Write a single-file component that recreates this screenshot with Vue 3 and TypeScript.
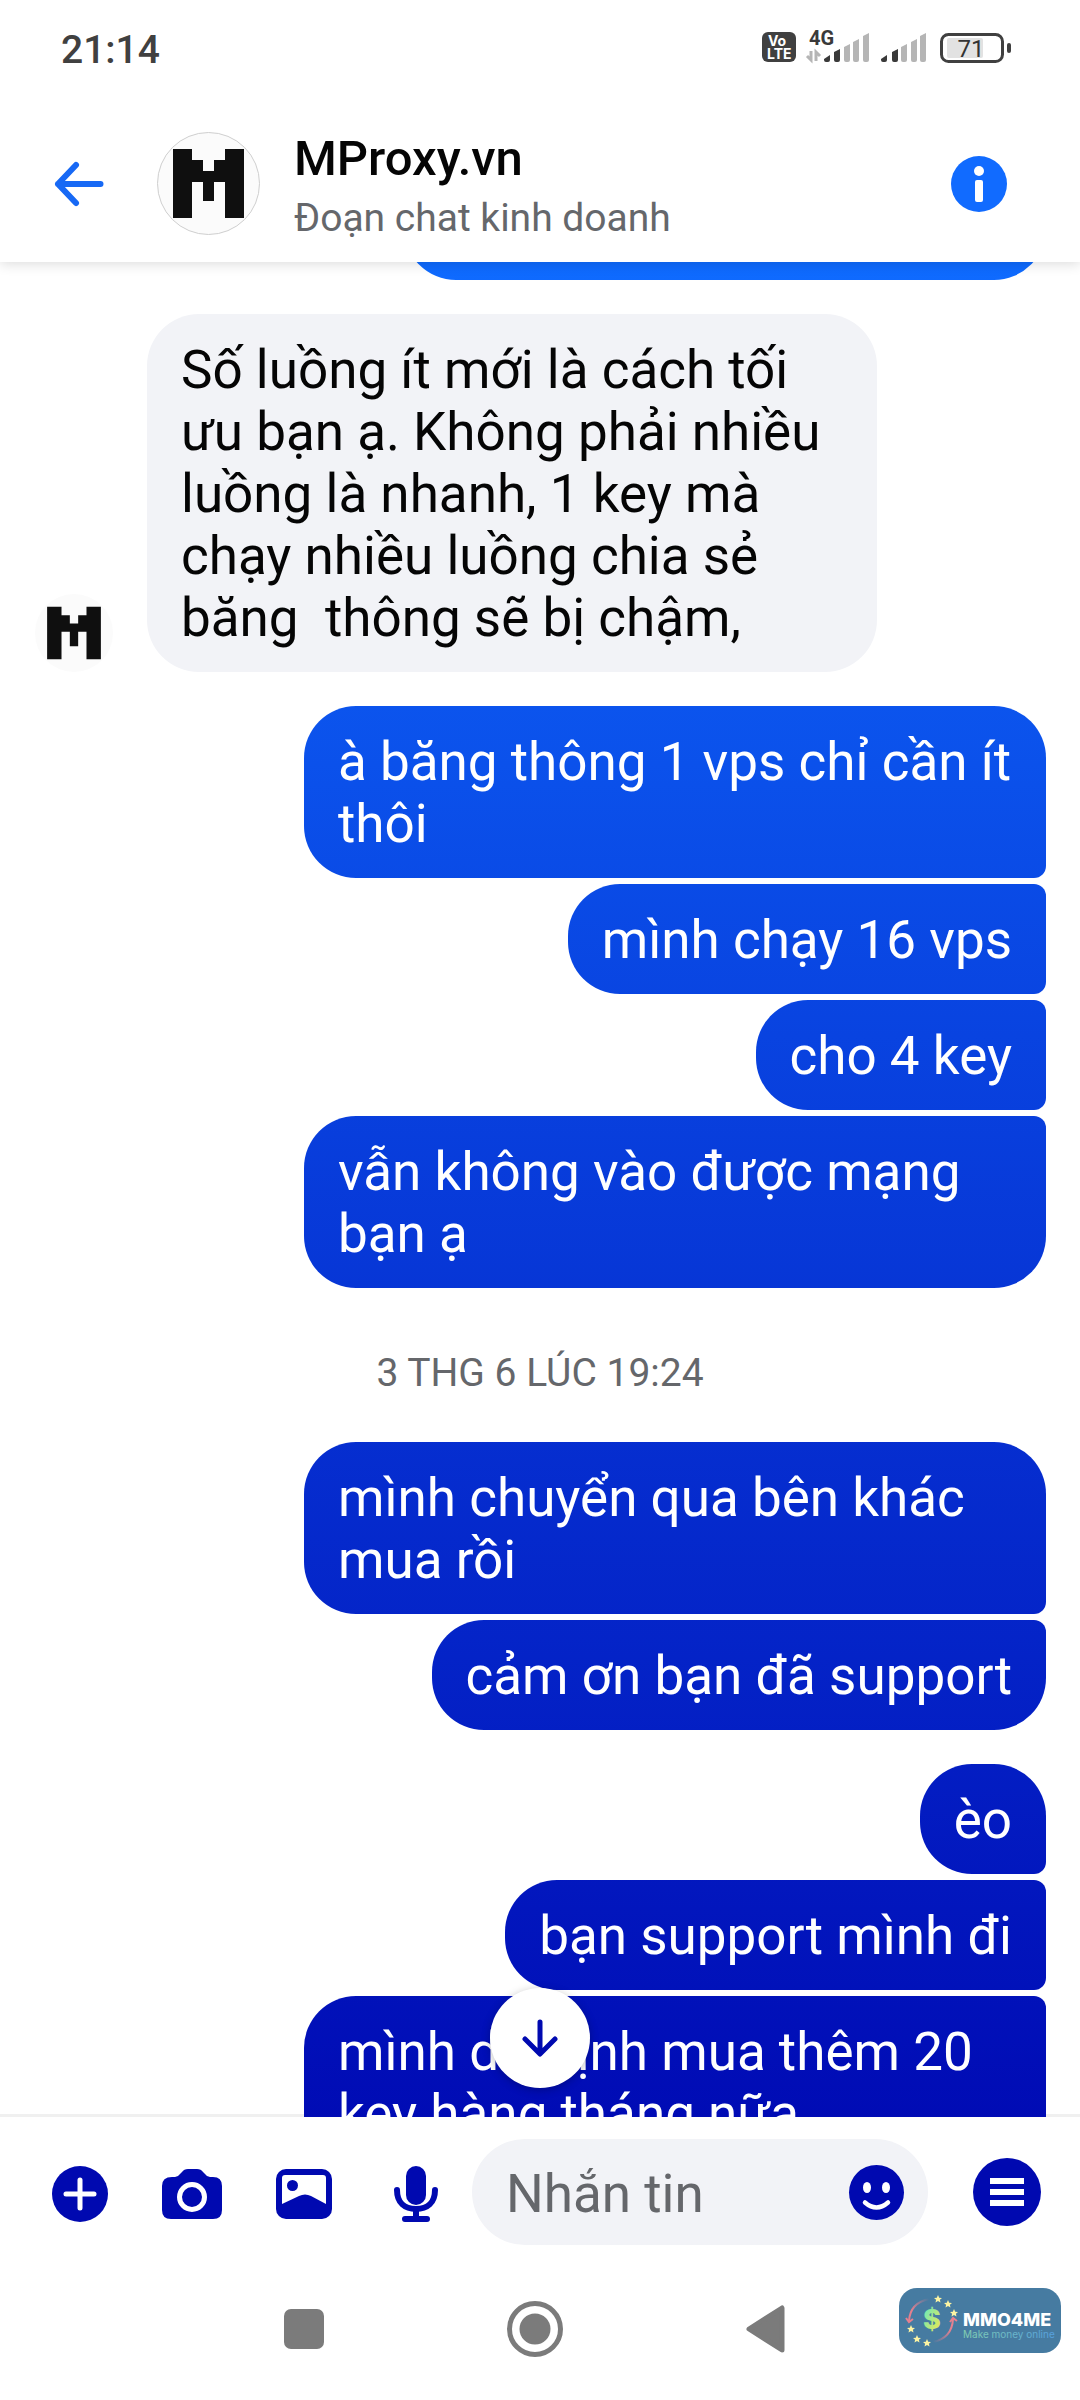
<script setup lang="ts">
import { ref } from 'vue'

type Shape = 'single' | 'first' | 'middle' | 'last'

interface Message {
  id: number
  text: string
  shape: Shape
}

const firstGroup: Message[] = [
  { id: 1, text: 'à băng thông 1 vps chỉ cần ít thôi', shape: 'first' },
  { id: 2, text: 'mình chạy 16 vps', shape: 'middle' },
  { id: 3, text: 'cho 4 key', shape: 'middle' },
  { id: 4, text: 'vẫn không vào được mạng bạn ạ', shape: 'last' },
]

const secondGroup: Message[] = [
  { id: 5, text: 'mình chuyển qua bên khác mua rồi', shape: 'first' },
  { id: 6, text: 'cảm ơn bạn đã support', shape: 'last' },
]

const thirdGroup: Message[] = [
  { id: 7, text: 'èo', shape: 'first' },
  { id: 8, text: 'bạn support mình đi', shape: 'middle' },
  { id: 9, text: 'mình dự định mua thêm 20 key hàng tháng nữa', shape: 'middle' },
]

const groupedAfterStamp = [secondGroup, thirdGroup]
const draft = ref('')
const logoPath = 'M16 17H35V28H46V39H57V28H68V17H87V86H68V50H57V69H46V50H35V86H16Z'
const star = 'M0-4 1.2-1.3 4-1.1 1.9.8 2.5 3.6 0 2.1-2.5 3.6-1.9.8-4-1.1-1.2-1.3Z'
const stars = [
  [39, 11], [49, 16], [55, 25], [12, 41], [18, 51], [28, 55],
]
</script>

<template>
  <div class="screen">
    <div class="status">
      <span class="clock">21:14</span>
      <svg class="status-icons" width="250" height="36" viewBox="0 0 250 36" aria-hidden="true">
        <rect x="0" y="4" width="34" height="30" rx="6" fill="#404040" />
        <text x="6" y="18" class="volte">Vo</text>
        <text x="5" y="31" class="volte">LTE</text>
        <text x="47" y="17" class="net">4G</text>
        <path d="M49 23v9l-4-4M54 33v-9l4 4" fill="none" stroke="#b5b5b5" stroke-width="3" />
        <g fill="#3a3a3a">
          <path d="M62 34v-3l6-4v5q0 2-2 2h-2q-2 0-2-2zM72 32v-8l6-3v11q0 2-2 2h-2q-2 0-2-2zM119 32v-1l6-4v5q0 2-2 2h-2q-2 0-2-2zM130 32v-8l6-3v11q0 2-2 2h-2q-2 0-2-2z" />
        </g>
        <g fill="#b5b5b5">
          <path d="M82 32V19l6-3v16q0 2-2 2h-2q-2 0-2-2zM91 32V14l6-3v21q0 2-2 2h-2q-2 0-2-2zM101 32V8l6-3v27q0 2-2 2h-2q-2 0-2-2zM139 32V19l6-3v16q0 2-2 2h-2q-2 0-2-2zM149 32V14l6-3v21q0 2-2 2h-2q-2 0-2-2zM158 32V8l6-3v27q0 2-2 2h-2q-2 0-2-2z" />
        </g>
        <rect x="179.500" y="6.500" width="61" height="27" rx="7" fill="none" stroke="#404040" stroke-width="3" />
        <rect x="185" y="10" width="36" height="20" rx="2" fill="#e2e2e2" />
        <rect x="245" y="15" width="4" height="10" rx="2" fill="#404040" />
        <text x="209" y="29" text-anchor="middle" class="charge">71</text>
      </svg>
    </div>

    <header class="header">
      <button class="icon-button back" type="button" aria-label="Quay lại">
        <svg width="50" height="46" viewBox="0 0 50 46">
          <path d="M46.500 23H4M22 4 4 23l18 19" fill="none" stroke="#1769f5" stroke-width="6" stroke-linecap="round" stroke-linejoin="round" />
        </svg>
      </button>
      <svg class="avatar" width="103" height="103" viewBox="0 0 103 103" aria-hidden="true">
        <circle cx="51.500" cy="51.500" r="51" fill="#fbfbfb" stroke="#cfcfcf" />
        <path :d="logoPath" fill="#0f0f0f" />
      </svg>
      <div class="contact">
        <h1 class="name">MProxy.vn</h1>
        <p class="kind">Đoạn chat kinh doanh</p>
      </div>
      <button class="icon-button" type="button" aria-label="Thông tin">
        <svg width="56" height="56" viewBox="0 0 56 56">
          <circle cx="28" cy="28" r="28" fill="#116bff" />
          <circle cx="28" cy="15" r="5" fill="#fff" />
          <rect x="24" y="24" width="8" height="22" rx="2" fill="#fff" />
        </svg>
      </button>
    </header>

    <main class="chat">
      <div class="bubble sent last scrolled" aria-hidden="true"></div>

      <div class="incoming">
        <svg width="78" height="78" viewBox="0 0 103 103" aria-hidden="true">
          <circle cx="51.500" cy="51.500" r="51.500" fill="#fbfbfb" />
          <path :d="logoPath" fill="#0f0f0f" />
        </svg>
        <p class="bubble received">Số luồng ít mới là cách tối ưu bạn ạ. Không phải nhiều luồng là nhanh, 1 key mà chạy nhiều luồng chia sẻ băng&nbsp; thông sẽ bị chậm,</p>
      </div>

      <div class="group">
        <p v-for="m in firstGroup" :key="m.id" class="bubble sent" :class="m.shape">{{ m.text }}</p>
      </div>

      <time class="stamp">3 THG 6 LÚC 19:24</time>

      <div v-for="(group, i) in groupedAfterStamp" :key="i" class="group">
        <p v-for="m in group" :key="m.id" class="bubble sent" :class="m.shape">{{ m.text }}</p>
      </div>

      <button class="jump" type="button" aria-label="Xuống tin nhắn mới nhất">
        <svg width="36" height="38" viewBox="0 0 36 38">
          <path d="M18 3v31M3 20l15 15 15-15" fill="none" stroke="#0009b0" stroke-width="5" stroke-linecap="round" stroke-linejoin="round" />
        </svg>
      </button>
    </main>

    <form class="composer" @submit.prevent>
      <button class="icon-button tool" type="button" aria-label="Thêm">
        <svg width="56" height="56" viewBox="0 0 56 56">
          <circle cx="28" cy="28" r="28" fill="#0009b0" />
          <path d="M28 14v28M14 28h28" stroke="#fff" stroke-width="5" stroke-linecap="round" />
        </svg>
      </button>
      <button class="icon-button tool" type="button" aria-label="Máy ảnh">
        <svg width="60" height="56" viewBox="0 0 60 56">
          <path d="M10 11h3q3 0 5-3l2-2q2-3 6-3h9q4 0 6 3l2 2q2 3 5 3h3q9 0 9 9v24q0 9-9 9H9q-9 0-9-9V20q0-9 10-9z" fill="#0009b0" />
          <circle cx="30" cy="31" r="12.500" fill="none" stroke="#fff" stroke-width="5" />
        </svg>
      </button>
      <button class="icon-button tool" type="button" aria-label="Ảnh">
        <svg width="56" height="56" viewBox="0 0 56 56">
          <rect x="0" y="3" width="56" height="50" rx="10" fill="#0009b0" />
          <path d="M9 9h38q3 0 3 3v26L35 30q-6-3-12 0L6 38V12q0-3 3-3z" fill="#fff" />
          <circle cx="16.500" cy="19.500" r="5.500" fill="#0009b0" />
        </svg>
      </button>
      <button class="icon-button tool" type="button" aria-label="Ghi âm">
        <svg width="44" height="56" viewBox="0 0 44 56">
          <rect x="12" y="0" width="20" height="39" rx="10" fill="#0009b0" />
          <path d="M3 24c0 13 8 19 19 19s19-6 19-19M22 43v10M11 53h22" fill="none" stroke="#0009b0" stroke-width="6" stroke-linecap="round" />
        </svg>
      </button>
      <div class="field">
        <input v-model="draft" type="text" placeholder="Nhắn tin" aria-label="Nhắn tin" />
        <button class="icon-button" type="button" aria-label="Biểu tượng cảm xúc">
          <svg width="55" height="55" viewBox="0 0 55 55">
            <circle cx="27.500" cy="27.500" r="27.500" fill="#0009b0" />
            <ellipse cx="18" cy="22.500" rx="4" ry="5.500" fill="#fff" />
            <ellipse cx="37" cy="22.500" rx="4" ry="5.500" fill="#fff" />
            <path d="M16 37.500q11.500 10 23 0" fill="none" stroke="#fff" stroke-width="4.500" stroke-linecap="round" />
          </svg>
        </button>
      </div>
      <button class="icon-button menu" type="button" aria-label="Menu">
        <svg width="68" height="68" viewBox="0 0 68 68">
          <circle cx="34" cy="34" r="34" fill="#0009b0" />
          <path d="M17 20h34v6H17zM17 31h34v6H17zM17 42h34v6H17z" fill="#fff" />
        </svg>
      </button>
    </form>

    <nav class="system-nav">
      <button class="icon-button" type="button" aria-label="Ứng dụng gần đây">
        <svg width="56" height="56" viewBox="0 0 56 56"><rect x="8" y="8" width="40" height="40" rx="7" fill="#7b7b7b" /></svg>
      </button>
      <button class="icon-button" type="button" aria-label="Màn hình chính">
        <svg width="56" height="56" viewBox="0 0 56 56">
          <circle cx="28" cy="28" r="25.500" fill="none" stroke="#7b7b7b" stroke-width="5" />
          <circle cx="28" cy="28" r="15.500" fill="#7b7b7b" />
        </svg>
      </button>
      <button class="icon-button" type="button" aria-label="Trở về">
        <svg width="56" height="56" viewBox="0 0 56 56">
          <path d="M11 28 44 7v42z" fill="#7b7b7b" stroke="#7b7b7b" stroke-width="5" stroke-linejoin="round" />
        </svg>
      </button>
    </nav>

    <div class="watermark">
      <svg width="162" height="65" viewBox="0 0 162 65">
        <defs>
          <linearGradient id="dollar" x1="0" y1="0" x2="1" y2="1">
            <stop offset="0.200" stop-color="#7be8b0" />
            <stop offset="0.900" stop-color="#eee94c" />
          </linearGradient>
          <linearGradient id="tagline" x1="0" y1="0" x2="1" y2="0">
            <stop offset="0" stop-color="#83d0b0" />
            <stop offset="1" stop-color="#559fdf" />
          </linearGradient>
          <linearGradient id="arcDown" x1="0" y1="1" x2="1" y2="0">
            <stop offset="0.300" stop-color="#e5808f" />
            <stop offset="1" stop-color="#e5808f" stop-opacity="0" />
          </linearGradient>
          <linearGradient id="arcUp" x1="1" y1="0" x2="0" y2="1">
            <stop offset="0.300" stop-color="#e5808f" />
            <stop offset="1" stop-color="#e5808f" stop-opacity="0" />
          </linearGradient>
        </defs>
        <path d="M30 11Q11 15 10 33" fill="none" stroke="url(#arcDown)" stroke-width="2" />
        <path d="M7 30l3 4 4-3M51 34l3-4 4 3" fill="none" stroke="#e5808f" stroke-width="2" />
        <path d="M54 31Q53 50 34 54" fill="none" stroke="url(#arcUp)" stroke-width="2" />
        <path v-for="(s, i) in stars" :key="i" :d="star" :transform="`translate(${s[0]} ${s[1]})`" fill="#fcf4a3" />
        <text x="33" y="41" text-anchor="middle" class="dollar">$</text>
        <text x="64" y="38" class="brand">MMO4ME</text>
        <text x="64" y="50" class="tagline">Make money online</text>
      </svg>
    </div>
  </div>
</template>

<style>
body {
  margin: 0;
  background: #fff;
}
</style>

<style scoped>
.screen {
  position: relative;
  display: flex;
  flex-direction: column;
  height: 100vh;
  overflow: hidden;
  background: #fff;
  color: #050505;
  font-family: Roboto, 'Noto Sans', sans-serif;
}

h1,
p {
  margin: 0;
}

svg {
  display: block;
  flex: none;
  overflow: visible;
}

.icon-button {
  display: flex;
  flex: none;
  align-items: center;
  justify-content: center;
  padding: 0;
  border: 0;
  background: none;
}

.status {
  position: relative;
  z-index: 2;
  display: flex;
  flex: none;
  justify-content: space-between;
  align-items: flex-start;
  box-sizing: border-box;
  height: 105px;
  padding: 28px 68px 0 61px;
  background: #fff;
}

.clock {
  font-size: 39px;
  font-weight: 500;
  line-height: 44px;
  color: #404040;
}

.volte {
  font: 700 14px Inter, sans-serif;
  fill: #fff;
}

.net {
  font-size: 20px;
  font-weight: 700;
  fill: #3a3a3a;
}

.charge {
  font-size: 24px;
  fill: #333;
}

.header {
  position: relative;
  z-index: 1;
  display: flex;
  flex: none;
  align-items: center;
  height: 157px;
  padding: 0 73px 0 34px;
  background: #fff;
  box-shadow: 0 2px 12px rgba(0, 0, 0, 0.14);
}

.back {
  width: 90px;
}

.avatar {
  margin-left: 33px;
}

.contact {
  flex: 1;
  margin-left: 34px;
  padding-top: 8px;
}

.name {
  font-size: 49px;
  font-weight: 500;
  line-height: 60px;
}

.kind {
  font-size: 39px;
  line-height: 58px;
  color: #65676b;
}

.chat {
  position: relative;
  z-index: 0;
  display: flex;
  flex: 1;
  flex-direction: column;
  gap: 34px;
  min-height: 0;
  overflow: hidden;
}

.chat::after {
  content: '';
  position: absolute;
  z-index: -1;
  right: 0;
  bottom: 0;
  left: 0;
  height: 3px;
  background: #f0f0f0;
}

.chat > * {
  flex: none;
}

.bubble {
  box-sizing: border-box;
  padding: 25px 34px 23px;
  border-radius: 52px;
  font-size: 53px;
  line-height: 62px;
}

.sent {
  max-width: 742px;
  background: linear-gradient(#0f6bff 262px, #0009b3 2160px) fixed;
  color: #fff;
}

.received {
  max-width: 730px;
  background: #f2f3f7;
}

.first {
  border-bottom-right-radius: 12px;
}

.middle {
  border-top-right-radius: 12px;
  border-bottom-right-radius: 12px;
}

.last {
  border-top-right-radius: 12px;
}

.scrolled {
  align-self: flex-end;
  width: 642px;
  height: 110px;
  margin: -92px 34px 0 0;
}

.incoming {
  display: flex;
  align-items: flex-end;
  gap: 34px;
  padding-left: 35px;
}

.group {
  display: flex;
  flex-direction: column;
  align-items: flex-end;
  gap: 6px;
  padding-right: 34px;
}

.stamp {
  padding: 28px 0 12px;
  font-size: 39px;
  line-height: 46px;
  text-align: center;
  color: #65676b;
}

.jump {
  position: absolute;
  bottom: 29px;
  left: 50%;
  display: flex;
  align-items: center;
  justify-content: center;
  width: 100px;
  height: 100px;
  margin-left: -50px;
  padding: 0;
  border: 0;
  border-radius: 50%;
  background: #fff;
  box-shadow: 0 2px 8px rgba(0, 0, 0, 0.25);
}

.composer {
  display: flex;
  flex: none;
  align-items: center;
  height: 150px;
  padding: 0 39px 0 24px;
}

.tool {
  box-sizing: border-box;
  width: 112px;
  height: 112px;
  padding-top: 4px;
}

.field {
  display: flex;
  flex: 1;
  align-items: center;
  min-width: 0;
  height: 106px;
  padding: 0 24px 0 34px;
  box-sizing: border-box;
  border-radius: 53px;
  background: #f2f3f7;
}

.field input {
  flex: 1;
  min-width: 0;
  padding: 4px 0 0;
  border: 0;
  outline: 0;
  background: none;
  color: #050505;
  font: 53px / 62px Roboto, 'Noto Sans', sans-serif;
}

.field input::placeholder {
  color: #65676b;
  opacity: 1;
}

.menu {
  margin-left: 45px;
}

.system-nav {
  display: flex;
  flex: none;
  justify-content: center;
  align-items: center;
  box-sizing: border-box;
  height: 133px;
  padding: 0 10px 9px 0;
}

.system-nav button {
  width: 231px;
}

.watermark {
  position: absolute;
  right: 19px;
  bottom: 47px;
  border-radius: 18px;
  background: #467ba1;
}

.dollar {
  font: 800 27px Inter, sans-serif;
  fill: url(#dollar);
}

.brand {
  font: 800 18px Inter, sans-serif;
  fill: #fff;
}

.tagline {
  font: 10px Inter, sans-serif;
  fill: url(#tagline);
}
</style>
